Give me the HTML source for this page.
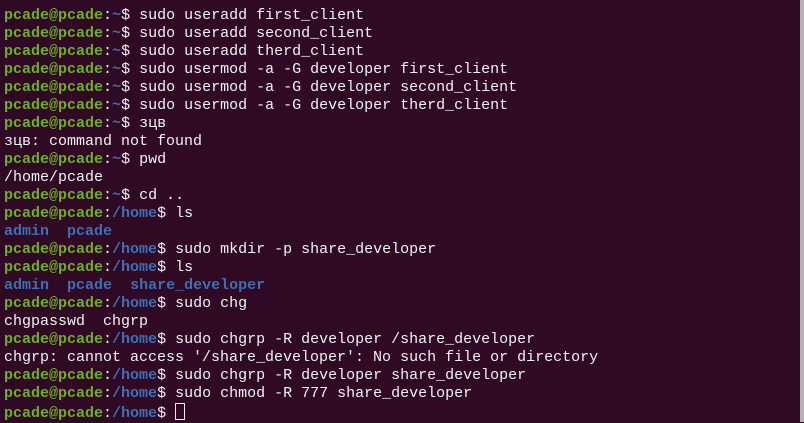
<!DOCTYPE html>
<html><head><meta charset="utf-8"><style>
html,body{margin:0;padding:0;}
body{width:804px;height:422px;background:#300a24;overflow:hidden;position:relative;}
pre{margin:0;position:absolute;left:4px;top:7px;font-family:"Liberation Mono",monospace;font-size:15px;line-height:18px;color:#f2f2f2;}
.g{color:#6fae27;font-weight:bold;}
.b{color:#3f6fb3;font-weight:bold;}
.cur{display:inline-block;width:8px;height:15px;border:1px solid #eee;vertical-align:-3px;}
.sb{position:absolute;right:0;top:0;width:4px;height:422px;background:#b3b3b3;}
</style></head><body>
<pre><span class="g">pcade@pcade</span>:<span class="b">~</span>$ sudo useradd first_client
<span class="g">pcade@pcade</span>:<span class="b">~</span>$ sudo useradd second_client
<span class="g">pcade@pcade</span>:<span class="b">~</span>$ sudo useradd therd_client
<span class="g">pcade@pcade</span>:<span class="b">~</span>$ sudo usermod -a -G developer first_client
<span class="g">pcade@pcade</span>:<span class="b">~</span>$ sudo usermod -a -G developer second_client
<span class="g">pcade@pcade</span>:<span class="b">~</span>$ sudo usermod -a -G developer therd_client
<span class="g">pcade@pcade</span>:<span class="b">~</span>$ зцв
зцв: command not found
<span class="g">pcade@pcade</span>:<span class="b">~</span>$ pwd
/home/pcade
<span class="g">pcade@pcade</span>:<span class="b">~</span>$ cd ..
<span class="g">pcade@pcade</span>:<span class="b">/home</span>$ ls
<span class="b">admin</span>  <span class="b">pcade</span>
<span class="g">pcade@pcade</span>:<span class="b">/home</span>$ sudo mkdir -p share_developer
<span class="g">pcade@pcade</span>:<span class="b">/home</span>$ ls
<span class="b">admin</span>  <span class="b">pcade</span>  <span class="b">share_developer</span>
<span class="g">pcade@pcade</span>:<span class="b">/home</span>$ sudo chg
chgpasswd  chgrp
<span class="g">pcade@pcade</span>:<span class="b">/home</span>$ sudo chgrp -R developer /share_developer
chgrp: cannot access '/share_developer': No such file or directory
<span class="g">pcade@pcade</span>:<span class="b">/home</span>$ sudo chgrp -R developer share_developer
<span class="g">pcade@pcade</span>:<span class="b">/home</span>$ sudo chmod -R 777 share_developer
<span class="g">pcade@pcade</span>:<span class="b">/home</span>$ <span class="cur"></span></pre>
<div class="sb"></div>
</body></html>
